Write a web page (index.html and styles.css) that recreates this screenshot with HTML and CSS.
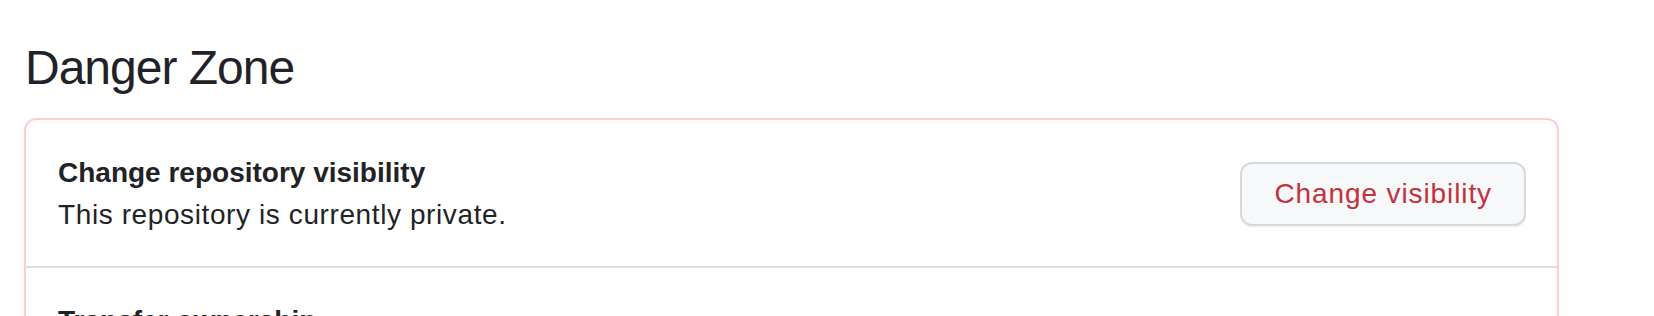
FILE: index.html
```html
<!DOCTYPE html>
<html lang="en">
<head>
<meta charset="utf-8">
<title>Danger Zone</title>
<link rel="stylesheet" href="styles.css">
</head>
<body>
<div class="page">
  <h2 class="subhead">Danger Zone</h2>
  <div class="danger-box">
    <div class="danger-row">
      <div class="row-text">
        <div class="row-title">Change repository visibility</div>
        <div class="row-desc">This repository is currently private.</div>
      </div>
      <button class="btn-danger" type="button">Change visibility</button>
    </div>
    <div class="danger-row">
      <div class="row-text">
        <div class="row-title">Transfer ownership</div>
        <div class="row-desc">Transfer this repository to another user or to an organization where you have the ability to create repositories.</div>
      </div>
      <button class="btn-danger" type="button">Transfer</button>
    </div>
  </div>
</div>
</body>
</html>
```

FILE: styles.css
```css
html, body {
  margin: 0;
  padding: 0;
  background: #ffffff;
}

body {
  font-family: "Liberation Sans", Arial, sans-serif;
  color: #1f2328;
}

.page {
  padding: 32px 0 0 24px;
  width: 1535px;
}

.subhead {
  margin: 0 0 14px 1px;
  font-size: 48px;
  line-height: 72px;
  font-weight: 400;
  letter-spacing: -1px;
  color: #1f2328;
}

.danger-box {
  border: 2px solid #ffcecb;
  border-radius: 12px;
  overflow: hidden;
}

.danger-row {
  display: flex;
  align-items: center;
  justify-content: space-between;
  padding: 32px 31px 30px 32px;
}

.danger-row + .danger-row {
  border-top: 2px solid #d8dee4;
}

.row-text {
  display: flex;
  flex-direction: column;
}

.row-title {
  font-size: 28px;
  line-height: 42px;
  font-weight: 700;
}

.row-desc {
  font-size: 28px;
  line-height: 42px;
  font-weight: 400;
  letter-spacing: 0.6px;
}

.btn-danger {
  box-sizing: border-box;
  height: 64px;
  padding: 0 32px;
  border: 2px solid #d5d8dc;
  border-radius: 12px;
  background: #f6f8fa;
  color: #c4313a;
  font-family: "Liberation Sans", Arial, sans-serif;
  font-size: 28px;
  font-weight: 400;
  letter-spacing: 0.9px;
  box-shadow: 0 2px 0 rgba(31, 35, 40, 0.04);
  cursor: pointer;
  flex-shrink: 0;
}
```
